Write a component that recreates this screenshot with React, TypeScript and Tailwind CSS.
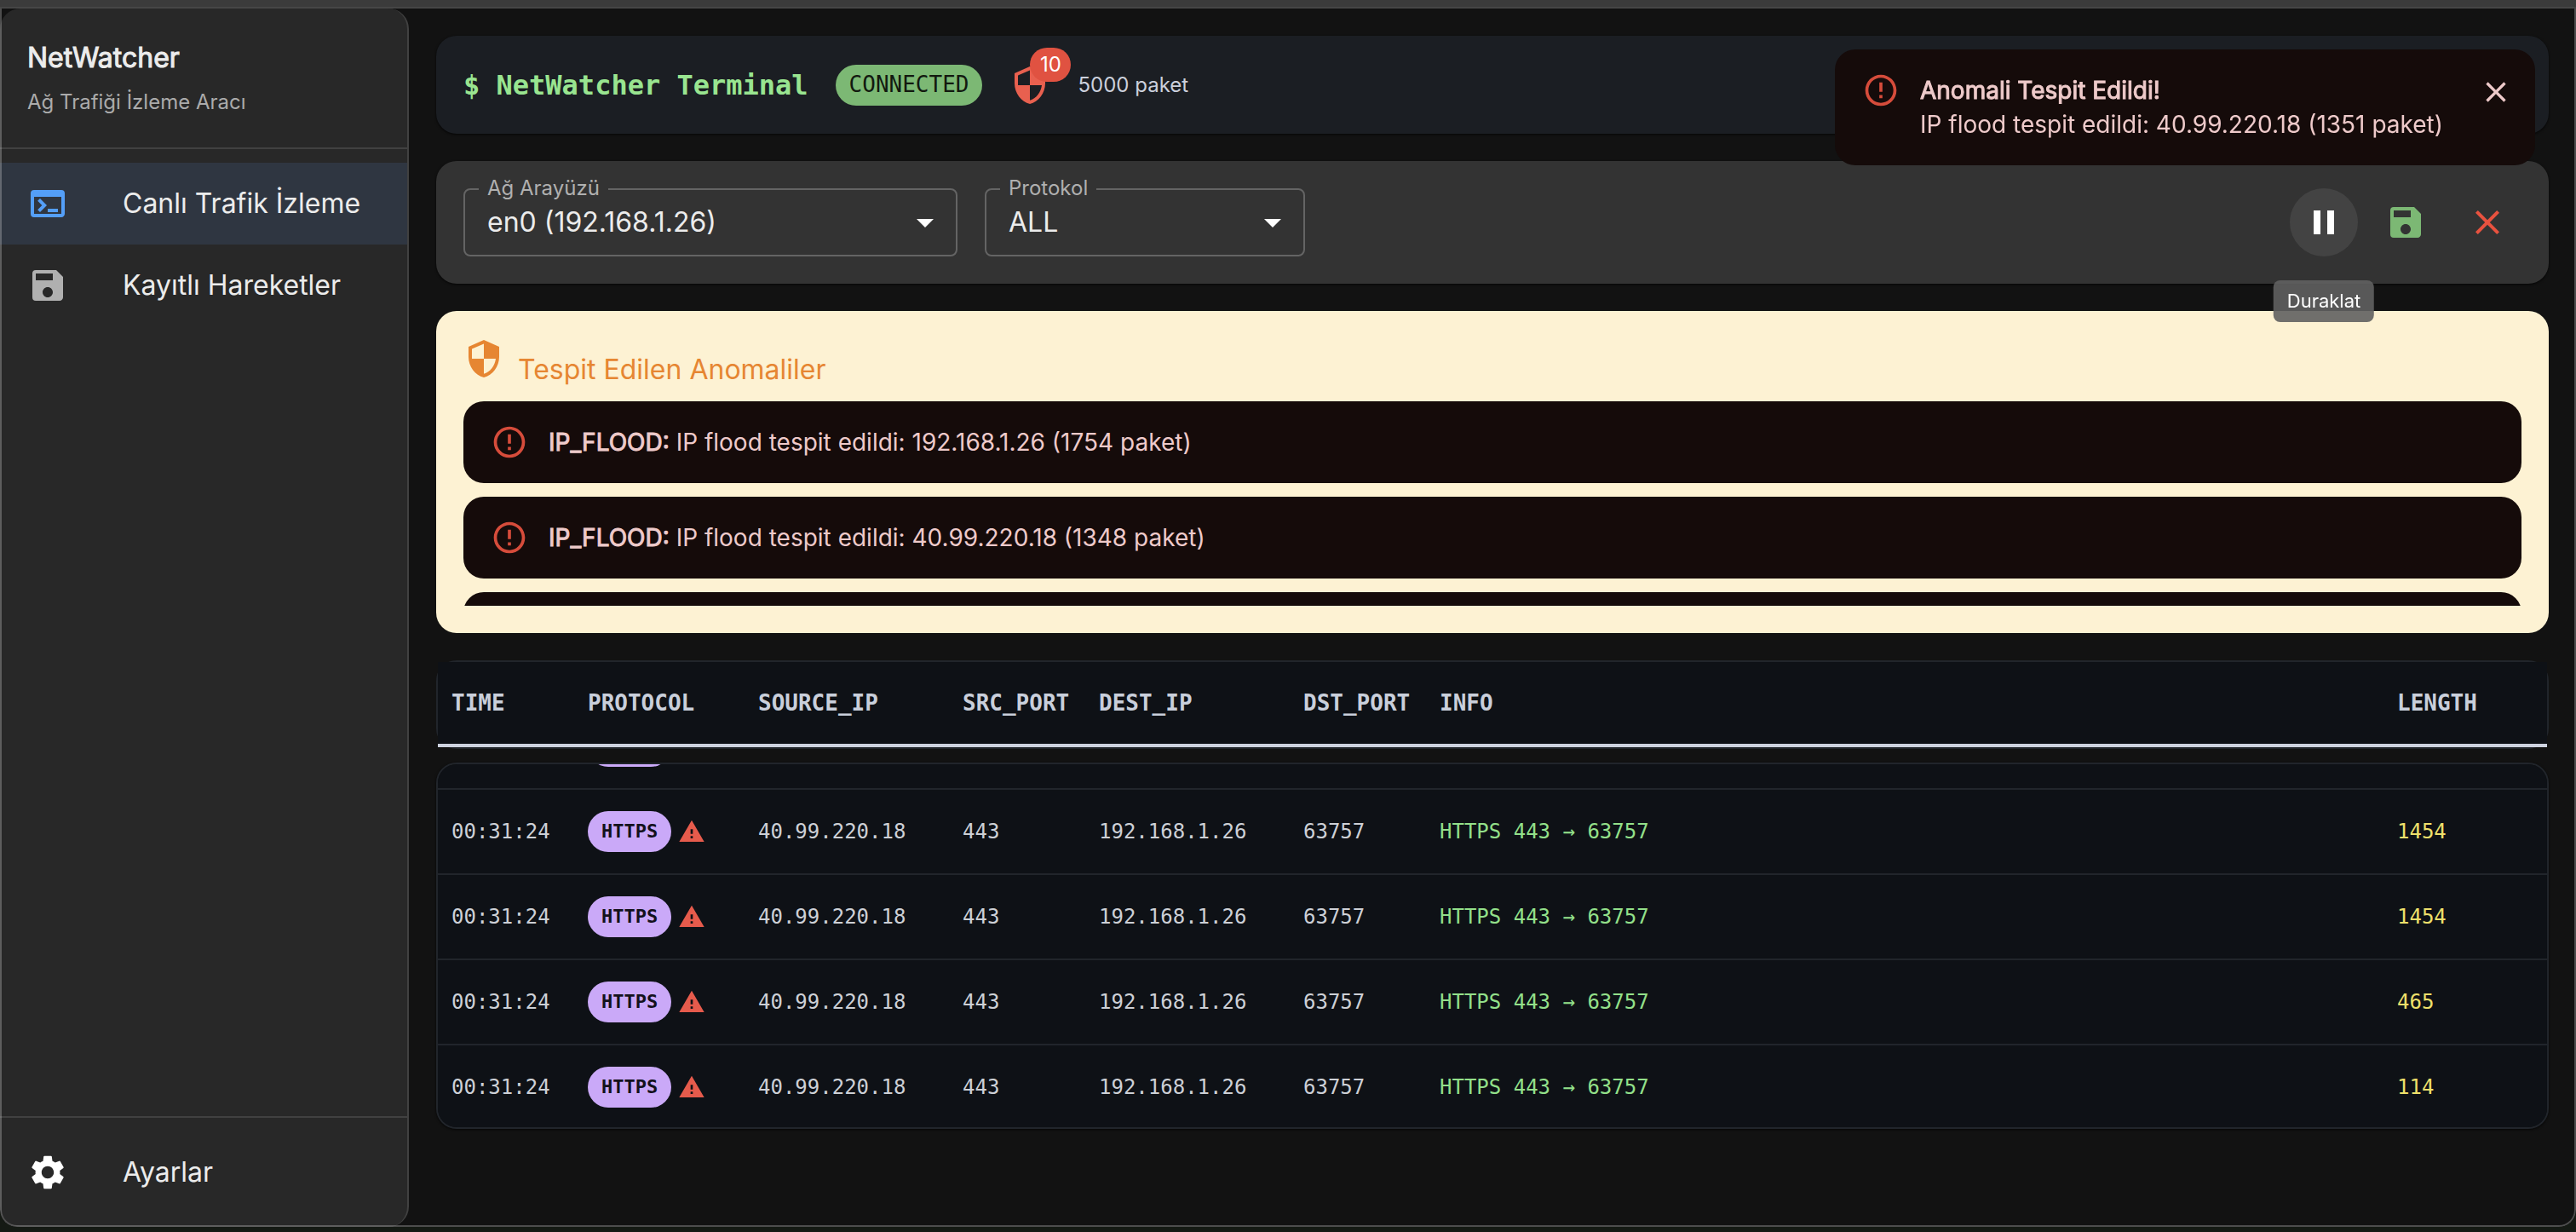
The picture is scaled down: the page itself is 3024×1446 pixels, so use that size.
import { useLayoutEffect, useRef } from "react";
import {
  MdArrowDropDown,
  MdClose,
  MdErrorOutline,
  MdPause,
  MdSave,
  MdSecurity,
  MdSettings,
  MdTerminal,
  MdWarning,
} from "react-icons/md";

const packets = [
  { id: 1, length: 1454 },
  { id: 2, length: 1454 },
  { id: 3, length: 1454 },
  { id: 4, length: 465 },
  { id: 5, length: 114 },
].map((p) => ({
  ...p,
  time: "00:31:24",
  protocol: "HTTPS",
  source: "40.99.220.18",
  sourcePort: "443",
  dest: "192.168.1.26",
  destPort: "63757",
  info: "HTTPS 443 → 63757",
}));

const anomalies = [
  { id: 1, text: "IP flood tespit edildi: 192.168.1.26 (1754 paket)" },
  { id: 2, text: "IP flood tespit edildi: 40.99.220.18 (1348 paket)" },
  { id: 3, text: "IP flood tespit edildi: 192.168.1.26 (1702 paket)" },
];

const columns = ["TIME", "PROTOCOL", "SOURCE_IP", "SRC_PORT", "DEST_IP", "DST_PORT", "INFO", "LENGTH"];

function Columns() {
  return (
    <colgroup>
      <col className="w-[160px]" />
      <col className="w-[200px]" />
      <col className="w-[240px]" />
      <col className="w-[160px]" />
      <col className="w-[240px]" />
      <col className="w-[160px]" />
      <col />
      <col className="w-[192px]" />
    </colgroup>
  );
}

function Sidebar() {
  return (
    <aside className="flex w-[480px] shrink-0 flex-col rounded-3xl border-r-2 border-[#414141] bg-[#282828]">
      <div className="flex h-[165px] flex-col border-b-2 border-[#414141] px-8 pt-8">
        <h1 className="text-[32px] leading-[52px] text-[#ececec] [-webkit-text-stroke:1px]">NetWatcher</h1>
        <p className="text-2xl leading-[52px] text-[#ababab]">Ağ Trafiği İzleme Aracı</p>
      </div>
      <nav className="flex flex-1 flex-col pt-4">
        <a href="#live" className="flex h-24 items-center gap-16 bg-[#2f3641] px-8 text-[32px] text-[#ececec]">
          <MdTerminal className="size-12 text-[#549ff8]" />
          Canlı Trafik İzleme
        </a>
        <a href="#saved" className="flex h-24 items-center gap-16 px-8 text-[32px] text-[#ececec]">
          <MdSave className="size-12 text-[#b0b0b0]" />
          Kayıtlı Hareketler
        </a>
      </nav>
      <div className="border-t-2 border-[#414141] py-4">
        <a href="#settings" className="flex h-24 items-center gap-16 px-8 text-[32px] text-[#ececec]">
          <MdSettings className="size-12 text-white" />
          Ayarlar
        </a>
      </div>
    </aside>
  );
}

function Select({ id, label, value, width }: { id: string; label: string; value: string; width: string }) {
  return (
    <div className={`relative ${width}`}>
      <select
        id={id}
        defaultValue={value}
        className="h-20 w-full appearance-none rounded-lg border-2 border-[#646464] bg-transparent pr-16 pl-[26px] text-[32px] text-[#ececec]"
      >
        <option>{value}</option>
      </select>
      <label
        htmlFor={id}
        className="absolute -top-4 left-[18px] bg-[#333333] px-[10px] text-2xl leading-8 text-[#b0b0b0]"
      >
        {label}
      </label>
      <MdArrowDropDown className="pointer-events-none absolute top-4 right-3.5 size-12 text-white" />
    </div>
  );
}

function TerminalHeader() {
  return (
    <header className="flex h-[115px] items-center gap-8 rounded-3xl bg-[#1b1e23] px-8 shadow-sm shadow-black/60">
      <h2 className="font-['DejaVu_Sans_Mono',monospace] text-[32px] font-bold text-[#99e590]">
        $ NetWatcher Terminal
      </h2>
      <span className="flex h-12 items-center rounded-full bg-[#7cb874] px-4 font-['DejaVu_Sans_Mono',monospace] text-[26px] text-[#12190f]">
        CONNECTED
      </span>
      <span className="relative">
        <MdSecurity className="size-12 text-[#e8604f]" />
        <span className="absolute -top-5 -right-6 flex h-10 w-12 items-center justify-center rounded-full bg-[#e05241] text-2xl text-white">
          10
        </span>
      </span>
      <span className="text-2xl text-[#cbd0dc]">5000 paket</span>
    </header>
  );
}

function Toolbar() {
  return (
    <section className="flex h-36 items-center gap-8 rounded-3xl bg-[#333333] px-8 shadow-sm shadow-black/60">
      <Select id="iface" label="Ağ Arayüzü" value="en0 (192.168.1.26)" width="w-[580px]" />
      <Select id="protocol" label="Protokol" value="ALL" width="w-[376px]" />
      <div className="ml-auto flex gap-4">
        <div className="relative">
          <button
            aria-label="Duraklat"
            className="flex size-20 items-center justify-center rounded-full bg-[#434343] text-white"
          >
            <MdPause className="size-12" />
          </button>
          <div
            role="tooltip"
            className="absolute top-[108px] left-1/2 z-10 flex h-[49px] -translate-x-1/2 items-center rounded-lg bg-[#616161]/90 px-4 text-[22px] text-white"
          >
            Duraklat
          </div>
        </div>
        <button aria-label="Kaydet" className="flex size-20 items-center justify-center rounded-full text-[#7cb874]">
          <MdSave className="size-12" />
        </button>
        <button aria-label="Temizle" className="flex size-20 items-center justify-center rounded-full text-[#e8523f]">
          <MdClose className="size-12" />
        </button>
      </div>
    </section>
  );
}

function AnomalyPanel() {
  return (
    <section className="rounded-3xl bg-[#fdf2d3] p-8">
      <h2 className="flex h-[58px] items-baseline gap-4 text-[32px] leading-[48px] text-[#e68632]">
        <MdSecurity className="size-12" />
        Tespit Edilen Anomaliler
      </h2>
      <ul className="mt-4 flex h-60 flex-col gap-4 overflow-y-auto [scrollbar-width:none]">
        {anomalies.map((a) => (
          <li
            key={a.id}
            className="flex h-24 shrink-0 items-center gap-6 rounded-3xl bg-[#150b0a] px-8 text-[28px] text-[#eecaca]"
          >
            <MdErrorOutline className="size-11 text-[#d64c3b]" />
            <p>
              <strong className="font-normal [-webkit-text-stroke:1px]">IP_FLOOD:</strong> {a.text}
            </p>
          </li>
        ))}
      </ul>
    </section>
  );
}

function PacketTable() {
  const scroller = useRef<HTMLDivElement>(null);

  useLayoutEffect(() => {
    if (scroller.current) scroller.current.scrollTop = 71;
  }, []);

  return (
    <section className="flex flex-col gap-4 font-['DejaVu_Sans_Mono',monospace] text-[#cdd0d6]">
      <div className="rounded-3xl border-2 border-[#21252b] bg-[#0e1116]">
        <table className="w-full table-fixed bg-[#0e1116] text-left text-[26px]">
          <Columns />
          <thead>
            <tr className="h-[98px] border-b-4 border-[#cdd2df]">
              {columns.map((c) => (
                <th key={c} className="px-4 font-bold whitespace-nowrap text-[#c9cfdb]">
                  {c}
                </th>
              ))}
            </tr>
          </thead>
        </table>
      </div>
      <div
        ref={scroller}
        className="h-[430px] overflow-y-auto rounded-3xl border-2 border-[#21252b] bg-[#0e1116] shadow-sm shadow-black/60 [scrollbar-width:none]"
      >
        <table className="w-full table-fixed text-left text-2xl" aria-label="Paketler">
          <Columns />
          <tbody>
            {packets.map((p) => (
              <tr key={p.id} className="h-[100px] border-b-2 border-[#21252b]">
                <td className="px-4">{p.time}</td>
                <td className="px-4">
                  <div className="flex items-center gap-2">
                    <span className="flex h-12 items-center rounded-full bg-[#caa9f8] px-4 text-[22px] font-bold text-[#14111c]">
                      {p.protocol}
                    </span>
                    <MdWarning className="size-8 text-[#e65b4c]" />
                  </div>
                </td>
                <td className="px-4">{p.source}</td>
                <td className="px-4">{p.sourcePort}</td>
                <td className="px-4">{p.dest}</td>
                <td className="px-4">{p.destPort}</td>
                <td className="px-4 text-[#93e08a]">{p.info}</td>
                <td className="px-4 text-[#efe06b]">{p.length}</td>
              </tr>
            ))}
          </tbody>
        </table>
      </div>
    </section>
  );
}

function Toast() {
  return (
    <div
      role="alert"
      className="absolute top-12 right-12 z-20 flex w-[822px] gap-6 rounded-3xl bg-[#150b0a] px-8 pt-[26px] pb-7 text-[28px] leading-10 text-[#eecaca]"
    >
      <MdErrorOutline className="size-11 text-[#d64c3b]" />
      <div className="flex-1 pt-0.5">
        <p className="[-webkit-text-stroke:1px]">Anomali Tespit Edildi!</p>
        <p>IP flood tespit edildi: 40.99.220.18 (1351 paket)</p>
      </div>
      <button aria-label="Kapat" className="-mr-2 flex size-11 items-center justify-center pt-1">
        <MdClose className="size-10" />
      </button>
    </div>
  );
}

export default function App() {
  return (
    <div className="flex min-h-screen flex-col bg-[#151a14] pb-1.5 font-['Inter',sans-serif]">
      <div className="h-2.5 border-b-2 border-[#464646] bg-[#3b3b3b]" />
      <div className="relative flex flex-1 overflow-hidden rounded-b-[20px] bg-[#121212]">
        <Sidebar />
        <main className="flex min-w-0 flex-1 flex-col gap-8 p-8">
          <TerminalHeader />
          <Toolbar />
          <AnomalyPanel />
          <PacketTable />
        </main>
        <Toast />
        <div className="pointer-events-none absolute inset-0 rounded-b-[20px] border-2 border-t-0 border-white/25" />
      </div>
    </div>
  );
}
